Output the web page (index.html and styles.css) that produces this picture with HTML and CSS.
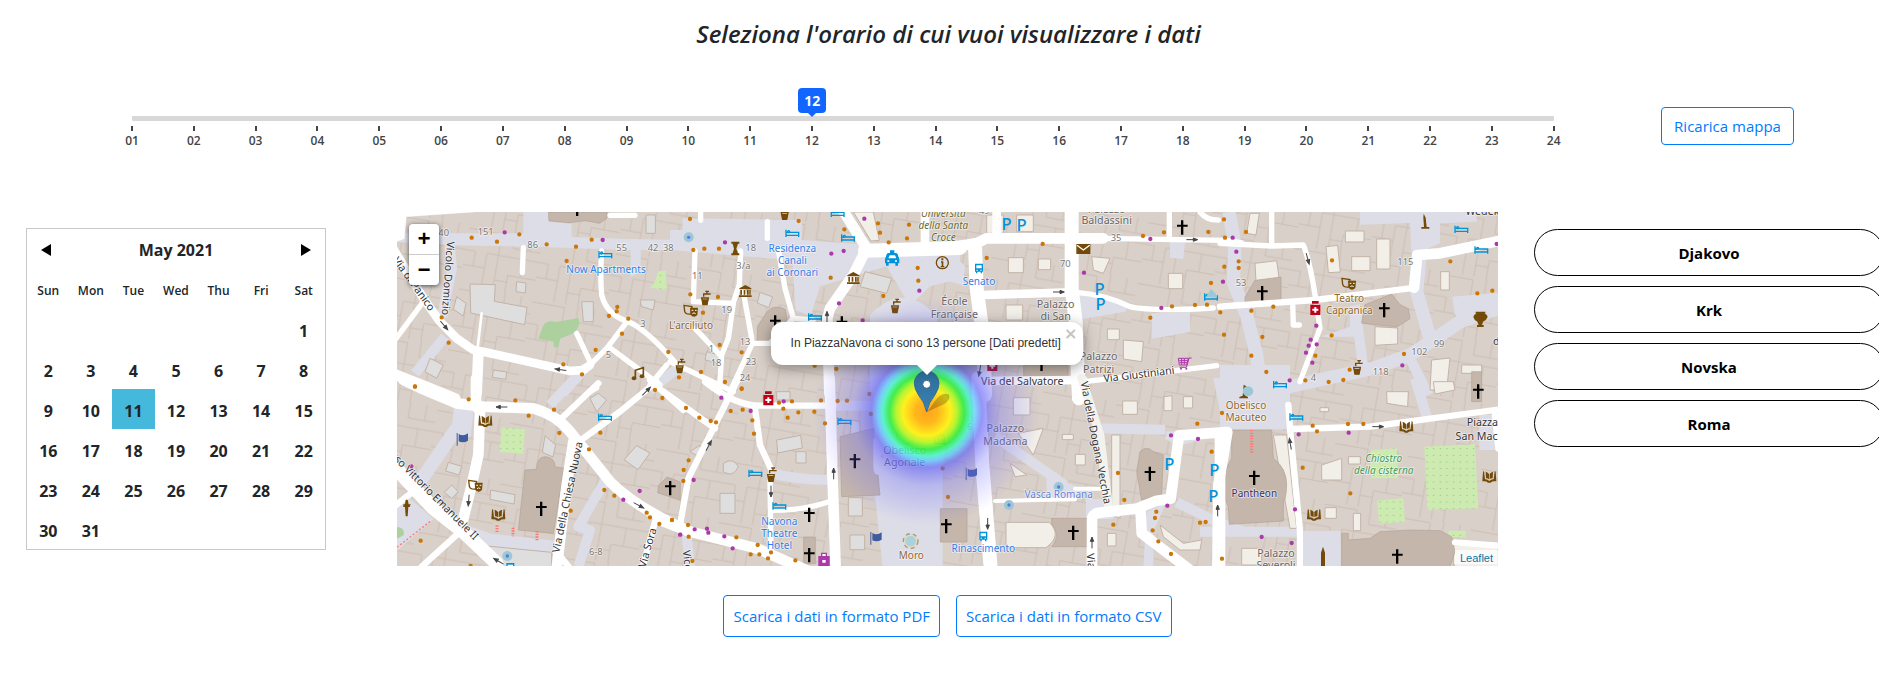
FILE: index.html
```html
<!DOCTYPE html>
<html lang="it">
<head>
<meta charset="utf-8">
<title>Mappa affollamento</title>
<link rel="stylesheet" href="styles.css">
</head>
<body>
<header class="page-title"><h1>Seleziona l'orario di cui vuoi visualizzare i dati</h1></header>

<section class="time-row">
  <div class="slider">
    <div class="slider-rail">
      <input class="slider-input" type="range" min="1" max="24" value="12" aria-label="Orario">
      <output class="slider-value">12</output>
    </div>
    <ul class="ticks">
      <li>01</li><li>02</li><li>03</li><li>04</li><li>05</li><li>06</li><li>07</li><li>08</li><li>09</li><li>10</li><li>11</li><li>12</li><li>13</li><li>14</li><li>15</li><li>16</li><li>17</li><li>18</li><li>19</li><li>20</li><li>21</li><li>22</li><li>23</li><li>24</li>
    </ul>
  </div>
  <button class="btn btn-reload" type="button">Ricarica mappa</button>
</section>

<main class="content">
  <section class="calendar">
    <div class="cal-head">
      <button class="cal-nav" type="button" aria-label="Mese precedente"><svg width="10" height="12" viewBox="0 0 10 12"><path d="M10 0v12L0 6z"/></svg></button>
      <span>May 2021</span>
      <button class="cal-nav" type="button" aria-label="Mese successivo"><svg width="10" height="12" viewBox="0 0 10 12"><path d="M0 0v12l10-6z"/></svg></button>
    </div>
    <table class="cal-table">
      <thead><tr><th>Sun</th><th>Mon</th><th>Tue</th><th>Wed</th><th>Thu</th><th>Fri</th><th>Sat</th></tr></thead>
      <tbody>
        <tr><td></td><td></td><td></td><td></td><td></td><td></td><td>1</td></tr>
        <tr><td>2</td><td>3</td><td>4</td><td>5</td><td>6</td><td>7</td><td>8</td></tr>
        <tr><td>9</td><td>10</td><td class="selected">11</td><td>12</td><td>13</td><td>14</td><td>15</td></tr>
        <tr><td>16</td><td>17</td><td>18</td><td>19</td><td>20</td><td>21</td><td>22</td></tr>
        <tr><td>23</td><td>24</td><td>25</td><td>26</td><td>27</td><td>28</td><td>29</td></tr>
        <tr><td>30</td><td>31</td><td></td><td></td><td></td><td></td><td></td></tr>
      </tbody>
    </table>
  </section>

  <div class="map-column">
    <div class="map">
      <svg class="map-canvas" viewBox="0 0 3303 1062" preserveAspectRatio="xMidYMid slice" role="img" aria-label="Mappa di Piazza Navona">
        <defs>
          <radialGradient id="heat">
            <stop offset="0" stop-color="#ffa51f"/><stop offset=".1" stop-color="#ffb61c"/><stop offset=".21" stop-color="#fff01e"/><stop offset=".27" stop-color="#b4f52a" stop-opacity=".95"/><stop offset=".33" stop-color="#2fef3c" stop-opacity=".9"/><stop offset=".39" stop-color="#40f5c8" stop-opacity=".8"/><stop offset=".43" stop-color="#58c4ff" stop-opacity=".75"/><stop offset=".49" stop-color="#5c5cf5" stop-opacity=".65"/><stop offset=".65" stop-color="#6a66f5" stop-opacity=".32"/><stop offset="1" stop-color="#6a66ff" stop-opacity="0"/>
          </radialGradient>
          <linearGradient id="pin" x2="0" y2="1"><stop stop-color="#2e6c97"/><stop offset="1" stop-color="#3883b7"/></linearGradient>
          <pattern id="orchard" width="20" height="20" patternUnits="userSpaceOnUse"><path fill="#cdebb0" d="M0 0h20v20H0z"/><path stroke="#8fc48a" stroke-width="3" d="M8 10h4"/></pattern>
          <pattern id="plots" width="178" height="148" patternUnits="userSpaceOnUse" patternTransform="rotate(10) scale(1.25)"><path class="wall" d="M0 8h80V60h98M80 60v88M0 96h52v52M52 96V60h28M112 0v38h40V0M110 104h68M110 104v44M140 60v44M24 96V60H0M80 120h30M152 38h26"/></pattern>
          <g id="cross"><path d="M-4-21h7v13h13v6H3v24h-7V-2h-12v-6h12z"/></g>
          <g id="bed" fill="none" stroke="#0092da" stroke-width="4"><path d="M-19-12v22M-19 5h38M19 10V-4H-8M-19-4h8"/><circle cx="-11" cy="-6" r="3"/></g>
          <g id="tap" fill="none" stroke="#734a08" stroke-width="4"><path d="M-11-2h20l-4 20H-7z"/><path fill="#734a08" d="M-8 4H7L4 17H-6z"/><path d="M-5-6v-8h21M5-14v-8M0-22h11"/></g>
          <g id="book" fill="#734a08"><path d="M-19-16l3-2 3 25Q-6 6 0 12 6 6 13 7l3-25 3 2 2 29Q8 12 4 17h-8Q-8 12-21 13z"/><path d="M-11-16Q-4-14-1-9v16q-4-4-9-3zM11-16Q4-14 1-9v16q4-4 9-3z"/></g>
          <g id="museum" fill="#734a08"><path d="M-18-8L0-18 18-8v3h-36zM-15-3h5v14h-5zM-5-3h5v14h-5zM5-3h5v14H5zM12-3h4v14h-4zM-19 13h38v5h-38z"/></g>
          <g id="mask"><path fill="none" stroke="#734a08" stroke-width="4" d="M-20-17l24 4-3 22q-16 2-19-8z"/><path fill="#734a08" d="M-2-10h24L20 12Q10 22 0 12z"/><path stroke="#fff" stroke-width="3" d="M3-2h5M13-2h5M5 8q5-5 10 0" fill="none"/></g>
          <g id="flag" fill="#3f5c9f"><path d="M-18-17h3v38h-3zM-12-14q14 8 28-2v22q-14 8-28 2z"/></g>
          <g id="bus"><path fill="#0092da" d="M-12-15h24v24h-3v5H5V9h-10v5h-4V9h-3z"/><path fill="#fff" d="M-8-10H8v9H-8zM-8 3h4v3h-4zM4 3h4v3H4z"/></g>
          <g id="med"><path fill="#c00018" d="M-10-21H10v8H-10zM-15-10h30v31h-30z"/><path fill="#fff" d="M-3-3h6v5h6v6H3v6h-6V8h-6V2h6z"/></g>
          <g id="arrow" stroke="#444" stroke-width="3" fill="#444"><path d="M-17 0h22"/><path d="M4-5l13 5L4 5z"/></g>
          <g id="fount"><circle r="15" fill="#9cc8d5"/><circle r="5" fill="#5a78e0"/></g>
        </defs>

        <!-- ground and building plots -->
        <path fill="#d9d0c9" d="M0 0h3303v1062H0z"/>
        <path fill="url(#plots)" d="M0 0h3303v1062H0z"/>

        <!-- pedestrian areas -->
        <g class="ped">
          <g transform="translate(-21 -21)"><path d="M45 85h355V21h75v30l70 5v40l175 6 150 3v30H752v65l-30 15v-79l-282-11-250-4-170-10z"/><path class="p30" d="M178 110l8 80-30 145"/><path class="p30" d="M165 395l-90 110"/><path class="p30" d="M588 485l-70 80M870 485l-90 70"/></g>
          <g transform="translate(819 -21)"><path d="M0 135V75h38V40l357 5v60l165 12 50 40 260-15v80l-90 22-60 60-70-120-200 60-28 90-45-18-10-150z"/><path d="M600 560V330q60-60 110-50 60 10 90 60l30 220z"/></g>
          <g transform="translate(1659 -21)"><path d="M0 150l45 30-5 60-40-10zM380 260q90 5 155 45l-10 15-145 25zM605 325l115-4v60l-115 20zM660 110h45l-5 52-40-4z"/></g>
          <g transform="translate(2469 -21)"><path class="p40" d="M27 21l18 100-5 110 40 100 30 120 15 120"/><path d="M420 21v38l150-5 5 100 85-40V55l110-5V21zM697 275l137-12v60l-110 25-20-20zM290 400l100-35v-60l40 0-10 90-120 0z"/><path class="p40" d="M600 150l-10 110 40 140M190 548l270-58 110-40 70-45 80-55 114-40"/><path class="p30" d="M405 300l25 190M565 450l60 120"/></g>
          <g transform="translate(-21 519)"><path d="M192 65h60l-10 90-60 5zM21 370l40-28 70 60-110 95z"/><path class="p40" d="M200 130L90 290M230 442l70 24 200 22"/><path class="p30" d="M650 280l-85 145 35 10-35 110M555-20l-75 80"/></g>
          <g transform="translate(819 519)"><path d="M608-20h230l-20 290v280H638l-28-270z"/><path class="p30" d="M295 262q80 22 182 23M50 450l10 100M490 62h120"/></g>
          <g transform="translate(1659 519)"><path class="p30" d="M440 130l205 4M135 155l210 145M680 352l120 58 80 30"/><path d="M290 275l90 28v45h-90zM408 342h82v60h-82zM590 380l60-30-40 90v110h-30zM650 140l160-10-5 22-120 30-40-20zM790-20h100v150h-70z"/></g>
          <g transform="translate(2469 519)"><path d="M0-60h210v192L0 135zM250 438h112v120H250zM778 90h60v105h-60z"/><path class="p30" d="M-60 440h310M585-20l40 130"/></g>
        </g>

        <!-- courtyards -->
        <g class="yard">
          <g transform="translate(-21 -21)"><path d="M240 237l76 2-3 50 98 18-7 52-162-35zM380 230l28 4-2 30-28-4zM200 275l28 20-8 38-30-20zM768 30h28v55h-28zM575 290h35v60h-30zM120 460l40 20-20 40-35-20zM750 285l45 0-5 30-35-10zM310 495l40 6-3 22-40-6z"/></g>
          <g transform="translate(819 -21)"><path d="M270 262l38 14-12 32-34-14zM585 200l80 20-15 45-80-20zM110 440l40 10-5 25-40-10z"/><path class="cream" d="M550 21h60l18 85-25 2z"/></g>
          <g transform="translate(1659 -21)"><path class="cream" d="M175 158h45v45h-45zM265 162h37v32h-37zM168 300h50v45h-50zM425 155l55 5-20 45-30-10zM655 205h43v46h-43zM472 372h36v32h-36zM520 405l60 5-5 60-55-8zM110 30h50v55h-50zM200 30h50v50h-50z"/></g>
          <g transform="translate(2469 -21)"><path class="cream" d="M90 25h28l-10 65-28-5zM105 175l65-8 8 58-70 6zM318 125l35-4 8 80-36 2zM376 78h56v33h-56zM470 102h40v90h-40zM395 155h55v42h-55zM465 365l68 4v48l-68 4zM635 465l55-6-10 96h-50zM662 200h26v55h-26zM725 480h60v25h-60z"/></g>
          <g transform="translate(-21 519)"><path d="M175 232l40 12-8 26-40-12zM185 300l20 20-20 20-22-18zM465 152l32 28-8 36-32-14zM302 315l73 14-3 28-72-14zM740 182l40 22-36 50-42-30zM600 40l25-15 25 20-30 35zM240 478l245 24v48H310z"/></g>
          <g transform="translate(819 519)"><path d="M320 165l72-14 5 38-74 15zM160 235q30-20 45 10-15 35-45 15zM320 45V20h40v25zM60 200l30-20 5 40zM150 325h45v60h-45zM535 338h42v55h-42zM540 450h44v44h-44zM378 200h30v34h-30zM545 105l25 5v40h-30z"/></g>
          <g transform="translate(1659 519)"><path class="cream" d="M190 38h50v52h-50zM205 145l75-15-30 80zM337 148h33v16h-33zM376 208h30v32h-30zM180 235l50 35-35 5zM168 412h130q40 40-10 76H168zM518 48h44v40h-44zM642 35l24-3v45h-24zM700 35h28v34h-28zM485 150h25v250l-25-10zM630 420l70 55 55-10-5 30-60 0-50-40zM472 445h26v38h-26z"/></g>
          <g transform="translate(2469 519)"><path class="cream" d="M160 150h40l30 280h-20zM305 240l60-20v65h-60zM315 368h34v32h-34zM400 385h22v52h-22zM640-10h60l5 25-60 12zM500 20l65 0-2 45-62-10zM300 68h26v12h-26zM65 490h60v50H65zM385 215h36v22h-36zM0 150h32l-22 90zM700 480h134v60H700z"/></g>
        </g>

        <!-- gardens -->
        <path fill="#add19e" d="M424 380l15-40q12-18 40-10l65-12q10 30-20 48l-35 14-5 26-14-1v-16zM0 945q24 0 20 25l-20 10z"/>
        <path fill="url(#orchard)" d="M770 215l15-38 22-1 2 56-50-4zM314 646l70 5-5 75-72-7zM2922 714l77-5 5 90h-82zM3082 704l152-7 10 192-153 5zM2941 866l78-7 5 70-78 7zM3154 956h52v20h-52z"/>

        <!-- churches and monuments -->
        <g class="church">
          <path d="M455 0h175v18l-22 16-42-8-50 6-60-6z"/>
          <path d="M1110 300q20-25 55-8l10 60-70 45-25-5 2-50z"/>
          <path d="M2544 255l30-50 78-10v68l-108 10zM2904 278l80-32 25 32 25 12 5 30-40 25-105-12zM1880 460h133v50h-133z"/>
          <path d="M384 774l35-2q0-38 27-38 28 3 28 30l27 5-32 195-105-10zM785 820l25-25 40 15v55l-68-23z"/>
          <path d="M1329 674l100-25 20 200-115 5zM1220 975h35v80h-35zM1630 890h80v100h-80z"/>
          <path d="M2229 719q20-20 40 0l30 10-5 120-60 15-15-85zM1964 919h105v85h-105q30-35 0-68z"/>
          <path d="M2504 654h120l5 85q40 30 40 80-2 45-10 50v58l-162 10-3-53q-13-25-15-65 5-50 25-80z"/>
          <path d="M2834 964h20v20l65-5 30-20 90-5 90 2 35 18 10 45-15 45h-325zM3224 479h30v90h-30z"/>
        </g>

        <!-- streets -->
        <g class="road">
          <path class="fill" d="M0 0h230L28 14 22 80 0 88z"/>
          <g transform="translate(-21 -21)"><path class="w26" d="M0 115l30 50 70 115 50 70 50 50 50 35 30 5 260 58 40-3 20-15"/><path class="w16" d="M595 485l55-55 65-85M635 138q-5 80 0 132 15 60 80 80 60 25 160 145M400 128l-3 75M100 290L15 405M655 425l155 115M560 385l40 85M660 31h75M600 560l20-12"/><path class="w30" d="M265 445l-5 120M15 508l80 32 100 40"/><path class="w8" d="M275 325l-13 110"/></g>
          <g transform="translate(819 -21)"><path class="w30" d="M515 10l75 120-40 80-70 100-8 30 6 225"/><path class="w40" d="M585 137l285-8"/><path class="w26" d="M765 21v100"/><path class="w16" d="M75 138l-5 152 120 5-15 105-20 50-7 110M212 138l-4 100-18 55M75 370l75 80M218 250l27 150v20l-65 140M325 135l20 115 25 90 60 5M370 340l-70 75h-60M0 470l190 90M292 50v50M92 21v25M-10 480l-50 60"/></g>
          <g transform="translate(1659 -21)"><path class="w30" d="M-60 135l140-20 30-15h350"/><path class="w16" d="M440 100l390 6 45 8M405 530l395-48M658 21v80M750 21q20 25 55 24M815 305l50-5"/><path class="w40" d="M365 10v240l12 100 10 230M75 120l5 130 20 150 5 170"/><path class="w26" d="M100 270l265-8M140 21v70M110 528l290-3"/><path class="w16" d="M380 262q90 8 160 43 60 15 250 4"/></g>
          <g transform="translate(2469 -21)"><path class="w16" d="M0 115l155 8 95-3q20 50 35 150l15 100-60 160M155 21v100M218 290l2 70h18"/><path class="w18" d="M0 305l285-20 285-35"/><path class="w30" d="M582 248l10-98 68-5 180-38"/></g>
          <g transform="translate(-21 519)"><path class="w30" d="M40-15l60 28 100 42 80 10 150 5q70 20 110 70l120 150q80 80 240 150"/><path class="w30" d="M258-20v80l12 20-5 130-20 90-32 130M550 170l-20 130-30 250"/><path class="w40" d="M-10 220l140 150 90 70 100 95"/><path class="w18" d="M580 160l110-80L800-10M515 100L625-5M780-15l100 90M205 445l-110 100M795 410l-38 140M0 375l75-60M500 500l40 50"/></g>
          <g transform="translate(819 519)"><path class="w30" d="M-30 405l90 35 200 50 160 70M479-20l8 280 10 290"/><path class="w18" d="M205-20l-85 170-65 130-25 140M105-10q90 72 165 72h220M255 70l15 110 32 70M-20 20L135 130"/><path class="w16" d="M300 290l3 210M310 376q90 0 167-26"/></g>
          <g transform="translate(1659 519)"><path class="w40" d="M85-20l12 260 25 310"/><path class="w26 cream-road" d="M395-20l55 170 26 220"/><path class="w12" d="M135 348l240-5M375 311h80"/><path class="w30" d="M426 550V405q0-20 24-22l110-12 60-24 42-6 25-190 145-10-27 160-3 260M572 380l3 65 145 110"/></g>
          <g transform="translate(2469 519)"><path class="w18" d="M205 60l5 70 30 310v120M215 132l235-7 390-52M705 472l130 10M825 90l10 100"/><path class="w30" d="M0 160v400"/></g>
        </g>
        <g fill="none" stroke="#f77" stroke-width="9" stroke-dasharray="4 4"><path d="M300 940v22M348 947v26M420 957v30M2564 654v70M1430 734h26"/><path stroke-width="4" stroke-dasharray="6 6" d="M0 1006l102-80"/></g>

        <!-- entrances and shops -->
        <g class="dots amber">
          <path transform="translate(-21 -21)" d="M245 98h0M321 110h0M388 88h0M470 118h0M558 125h0M530 168h0M605 104h0M682 306h0M680 319h0M657 333h0M715 341h0M696 386h0M617 435h0M835 441h0M155 337h0M176 413h0M520 478h0M576 508h0M75 545h0"/>
          <path transform="translate(819 -21)" d="M60 42h0M70 135h0M103 131h0M147 131h0M386 48h0M523 73h0M624 55h0M630 83h0M717 59h0M711 100h0M656 112h0M743 189h0M745 227h0M482 218h0M640 273h0M144 276h0M61 268h0M99 323h0M149 420h0M215 442h0M93 501h0M165 531h0M27 517h0M215 550h0M434 482h0M499 492h0"/>
          <path transform="translate(1659 -21)" d="M278 117h0M110 159h0M579 93h0M642 82h0M775 81h0M822 43h0M825 98h0M823 185h0M866 169h0M866 189h0M783 234h0M666 304h0M735 300h0M771 299h0M601 338h0M811 322h0M822 389h0"/>
          <path transform="translate(2469 -21)" d="M78 81h0M336 166h0M691 169h0M772 265h0M817 257h0M160 305h0M94 317h0M127 396h0M94 452h0M139 501h0M335 391h0M286 452h0M552 447h0M389 494h0M370 525h0M326 531h0M256 526h0"/>
          <path transform="translate(-21 519)" d="M75 4h0M236 43h0M376 46h0M416 92h0M492 74h0M508 144h0M631 143h0M597 193h0M795 15h0M817 39h0M643 315h0M673 332h0M770 383h0M780 397h0M808 417h0M846 405h0M542 377h0M92 467h0M242 543h0"/>
          <path transform="translate(819 519)" d="M215 12h0M48 69h0M88 98h0M122 108h0M138 112h0M182 78h0M218 74h0M247 106h0M252 146h0M327 53h0M366 49h0M340 71h0M353 98h0M385 82h0M433 80h0M453 46h0M465 115h0M503 48h0M531 47h0M598 27h0M603 87h0M56 226h0M41 255h0M40 288h0M54 420h0M56 455h0M199 457h0M263 480h0M242 508h0M268 508h0M303 502h0M294 520h0M376 526h0M67 528h0M6 405h0M818 250h0M834 336h0M809 113h0"/>
          <path transform="translate(1659 519)" d="M504 264h0M523 345h0M490 419h0M785 200h0M742 116h0M816 84h0M619 380h0M615 399h0M608 436h0M625 469h0M663 507h0M750 413h0M767 411h0M816 521h0"/>
          <path transform="translate(2469 519)" d="M278 122h0M291 139h0M384 117h0M430 117h0M248 248h0M391 325h0"/>
        </g>
        <g class="dots violet">
          <path d="M323 61h0M617 84h0M984 91h0M1303 125h0M1340 117h0M1402 20h0M1567 236h0M1326 274h0M1397 325h0M2260 81h0M2061 182h0M2293 288h0M2507 77h0M2518 119h0M2478 209h0M2758 341h0M2741 383h0M2735 401h0M2759 397h0M2727 422h0M2746 452h0M3016 460h0M2678 505h0M3299 96h0M43 763h0M679 863h0M728 837h0M849 968h0M973 557h0M1061 597h0M890 804h0M850 968h0M893 952h0M930 950h0M934 962h0M982 973h0M1007 1009h0M1160 568h0M2322 670h0M2403 681h0M2311 881h0M2705 667h0M2855 662h0M2694 892h0M2594 975h0M2684 993h0"/>
        </g>

        <!-- points of interest -->
        <g>
          <use href="#cross" x="541" y="-10"/><use href="#cross" x="1135" y="331"/><use href="#cross" x="1335" y="334"/><use href="#cross" x="2356" y="46"/><use href="#cross" x="2596" y="243"/><use href="#cross" x="2962" y="294"/><use href="#cross" x="3244" y="538"/><use href="#cross" x="433" y="890"/><use href="#cross" x="820" y="828"/><use href="#cross" x="1374" y="747"/><use href="#cross" x="1237" y="908"/><use href="#cross" x="1237" y="1029"/><use href="#cross" x="1648" y="942"/><use href="#cross" x="2029" y="962"/><use href="#cross" x="2259" y="785"/><use href="#cross" x="2572" y="797"/><use href="#cross" x="3001" y="1033"/><use href="#cross" x="1934" y="455"/>
          <use href="#bed" x="625" y="129"/><use href="#bed" x="1186" y="65"/><use href="#bed" x="1353" y="79"/><use href="#bed" x="1322" y="5"/><use href="#bed" x="1254" y="316"/><use href="#bed" x="2442" y="256"/><use href="#bed" x="3193" y="53"/><use href="#bed" x="3253" y="115"/><use href="#bed" x="2649" y="519"/><use href="#bed" x="2698" y="616"/><use href="#bed" x="624" y="617"/><use href="#bed" x="1342" y="629"/><use href="#bed" x="1075" y="785"/><use href="#bed" x="1147" y="883"/>
          <use href="#tap" x="925" y="260"/><use href="#tap" x="849" y="464"/><use href="#tap" x="1495" y="284"/><use href="#tap" x="1164" y="4"/><use href="#tap" x="1123" y="790"/><use href="#tap" x="2881" y="468"/>
          <use href="#museum" x="1045" y="237"/><use href="#museum" x="1369" y="198"/><use href="#museum" x="1628" y="679"/>
          <use href="#mask" x="881" y="297"/><use href="#mask" x="2855" y="216"/><use href="#mask" x="235" y="822"/>
          <use href="#book" x="265" y="628"/><use href="#book" x="304" y="909"/><use href="#book" x="3028" y="645"/><use href="#book" x="3277" y="795"/><use href="#book" x="2751" y="909"/>
          <use href="#flag" x="197" y="680"/><use href="#flag" x="1438" y="977"/><use href="#flag" x="1724" y="784"/>
          <use href="#bus" x="1746" y="170"/><use href="#bus" x="1759" y="974"/><use href="#bus" x="340" y="1068"/>
          <use href="#med" x="2755" y="288"/><use href="#med" x="1114" y="559"/><use href="#med" x="1786" y="456"/>
          <use href="#fount" x="875" y="76"/><use href="#fount" x="1985" y="825"/><use href="#fount" x="1836" y="879"/><use href="#fount" x="331" y="1032"/>
          <path fill="#734a08" d="M2540 518l8 5-3 28 8 4v4h-26v-4l10-4z"/>
          <path fill="#9cc8d5" d="M2537 538a16 15 0 1032 0 16 15 0 10-32 0M2426 256l16-25 18 18v7z"/>
          <path fill="#734a08" d="M3080 5l6 12 3 28h8v5h-24v-5h8l-2-28zM2772 1022l6-18 6 18v40h-12zM1003 89h24v6h-4l-5 15 5 14h4v6h-24v-6h4l4-14-4-15h-4zM26 863h6l3 14h6l-3 8h-4l-2 28h-6l-2-28h-5v-8h5zM3236 299h29v6h-5q10 0 12 10-4 10-14 14l-3 10h5v6h-20v-6h5l-4-10q-10-5-12-14 2-10 12-10h-5z"/>
          <path fill="none" stroke="#734a08" stroke-width="5" d="M715 497v-22l24-8v24"/><g fill="#734a08"><ellipse cx="711" cy="499" rx="7" ry="6"/><ellipse cx="735" cy="493" rx="7" ry="6"/></g>
          <circle cx="1636" cy="152" r="18" fill="none" stroke="#734a08" stroke-width="4"/><path fill="#734a08" d="M1633 139h6v6h-6zM1632 148h7v14h3v4h-11v-4h3v-10h-2z"/>
          <path fill="#0092da" d="M1464 142l5-15q2-4 6-4h4v-8h13v8h4q4 0 6 4l5 15v12h-4v7h-8v-7h-20v7h-8v-7h-3z"/><path fill="#fff" d="M1474 139l4-9h16l4 9zM1471 145h6v4h-6zM1494 145h6v4h-6z"/>
          <path fill="#734a08" d="M2038 96h42v30h-42z"/><path fill="none" stroke="#fff" stroke-width="4" d="M2040 100l19 14 19-14"/>
          <path fill="none" stroke="#ac39ac" stroke-width="3" d="M2344 439h30l-5 20h-22zM2384 438h-8l-8 28h-20M2347 446h26M2348 452h24M2354 440v18M2362 440v18"/><g fill="#ac39ac"><circle cx="2352" cy="470" r="3"/><circle cx="2368" cy="470" r="3"/></g>
          <path fill="#ac39ac" d="M1264 1032h8v-10h18v10h8v34h-34z"/><path fill="#fff" d="M1276 1026h10v6h-10zM1276 1044h10v8h-10z"/>
          <circle cx="1541" cy="987" r="22" fill="#e2d8c8" stroke="#a9967a" stroke-width="4" stroke-dasharray="12 10"/><circle cx="1541" cy="987" r="16" fill="#a9d3dc"/>
          <path class="ped" d="M1429 680q14-8 16 4l12 80q0 24-16 24-10 0-12-20z"/>
          <circle cx="1525" cy="671" r="26" fill="none" stroke="#8c9a90" stroke-width="2"/>
          <use href="#arrow" transform="translate(141 340) rotate(50)"/><use href="#arrow" transform="translate(491 473) rotate(188)"/><use href="#arrow" transform="translate(314 585) rotate(180)"/><use href="#arrow" transform="translate(215 865) rotate(95)"/><use href="#arrow" transform="translate(725 880) rotate(28)"/><use href="#arrow" transform="translate(748 538) rotate(-45)"/><use href="#arrow" transform="translate(935 701) rotate(-62)"/><use href="#arrow" transform="translate(1122 838) rotate(90)"/><use href="#arrow" transform="translate(1310 785) rotate(-90)"/><use href="#arrow" transform="translate(1290 315) rotate(-90)"/><use href="#arrow" transform="translate(1985 240)"/><use href="#arrow" transform="translate(2385 83)"/><use href="#arrow" transform="translate(2732 140) rotate(75)"/><use href="#arrow" transform="translate(2943 644)"/><use href="#arrow" transform="translate(2680 696) rotate(-100)"/><use href="#arrow" transform="translate(2462 896) rotate(-90)"/><use href="#arrow" transform="translate(2085 992) rotate(-90)"/><use href="#arrow" transform="translate(1772 935) rotate(90)"/><use href="#arrow" transform="translate(1748 476) rotate(100)"/><use href="#arrow" transform="translate(305 1048) rotate(210)"/>
        </g>

        <!-- labels -->
        <g class="label num">
          <text x="124" y="72">40</text><text x="242" y="70">151</text><text x="391" y="109">86</text><text x="658" y="117">55</text><text x="752" y="117">42</text><text x="798" y="117">38</text><text x="730" y="345">3</text><text x="626" y="438">5</text><text x="1045" y="117">18</text><text x="1018" y="172">3/a</text><text x="885" y="200">11</text><text x="973" y="304">19</text><text x="1028" y="399">13</text><text x="935" y="420">1</text><text x="941" y="462">18</text><text x="1046" y="460">23</text><text x="1028" y="508">24</text><text x="2141" y="86">35</text><text x="1989" y="165">70</text><text x="2516" y="222">53</text><text x="3001" y="159">115</text><text x="3110" y="405">99</text><text x="3043" y="429">102</text><text x="2927" y="489">118</text><text x="2741" y="508">4</text><text x="576" y="1028">6-8</text><text x="1664" y="585">3</text><text x="1660" y="625">10</text><text x="1710" y="655">6</text><text x="1746" y="7">49</text>
        </g>
        <g class="label blue"><text x="627" y="184">Now Apartments</text><text x="1186" y="120">Residenza</text><text x="1186" y="156">Canali</text><text x="1186" y="192">ai Coronari</text><text x="1746" y="219">Senato</text><text x="1147" y="939">Navona</text><text x="1147" y="975">Theatre</text><text x="1147" y="1011">Hotel</text><text x="1759" y="1021">Rinascimento</text><text class="vasca" x="1985" y="858">Vasca Romana</text></g>
        <g class="label brown"><text x="882" y="352">L'arciliuto</text><text x="2857" y="271">Teatro</text><text x="2857" y="306">Capranica</text><text x="2547" y="592">Obelisco</text><text x="2547" y="628">Macuteo</text><text x="1543" y="1042">Moro</text></g>
        <g class="label grey"><text x="1523" y="727">Obelisco</text><text x="1523" y="762">Agonale</text><text x="1672" y="280">École</text><text x="1672" y="319">Française</text><text x="1976" y="287">Palazzo</text><text x="1976" y="325">di San</text><text x="2129" y="37">Baldassini</text><text x="2129" y="2">Palazzo</text><text x="2105" y="444">Palazzo</text><text x="2105" y="482">Patrizi</text><text x="1825" y="661">Palazzo</text><text x="1825" y="699">Madama</text><text x="2637" y="1036">Palazzo</text><text x="2637" y="1072">Severoli</text></g>
        <g class="label olive"><text x="1639" y="15">Università</text><text x="1639" y="51">della Santa</text><text x="1639" y="86">Croce</text></g>
        <g class="label green"><text x="2960" y="749">Chiostro</text><text x="2960" y="785">della cisterna</text></g>
        <g class="label dark"><text x="2572" y="854" class="navy">Pantheon</text><text x="3256" y="641">Piazza</text><text x="3264" y="683">San Macuto</text><text x="3280" y="8">Wedekind</text><text x="3302" y="400">di</text></g>
        <g class="label street">
          <text transform="translate(142 198) rotate(94)">Vicolo Domizio</text>
          <text transform="translate(42 222) rotate(54)">Via di Panico</text>
          <text transform="translate(92 846) rotate(45)">Corso Vittorio Emanuele II</text>
          <text transform="translate(522 858) rotate(-78)">Via della Chiesa Nuova</text>
          <text transform="translate(762 1010) rotate(-74)">Via Sora</text>
          <text transform="translate(862 1060) rotate(84)">Vicolo</text>
          <text transform="translate(2086 694) rotate(79)">Via della Dogana Vecchia</text>
          <text transform="translate(2073 1066) rotate(84)">Via di</text>
          <text x="1876" y="518">Via del Salvatore</text>
          <text transform="translate(2227 498) rotate(-7)">Via Giustiniani</text>
        </g>
        <g class="parking"><text x="1829" y="55">P</text><text x="1874" y="58">P</text><text x="2108" y="248">P</text><text x="2111" y="295">P</text><text x="2317" y="773">P</text><text x="2452" y="791">P</text><text x="2449" y="869">P</text></g>

        <!-- crowd density -->
        <circle cx="1589" cy="600" r="340" fill="url(#heat)"/>
        <path d="M1590 600l22-30q22-32 44-22 6 14-14 28z" fill="#000" opacity=".22"/>
        <path fill="url(#pin)" stroke="#2e6c97" stroke-width="3" d="M1589 600q-6-30-24-50-13-20-13-36a37 37 0 0174 0q0 16-13 36-18 20-24 50z"/>
        <circle cx="1589" cy="517" r="12" fill="#fff" stroke="#2b638b" stroke-width="3"/>
      </svg>
      <div class="zoom"><button type="button" aria-label="Zoom in">+</button><button type="button" aria-label="Zoom out">−</button></div>
      <div class="popup">In PiazzaNavona ci sono 13 persone [Dati predetti]<button class="popup-close" type="button" aria-label="Chiudi">×</button></div>
      <a class="attribution" href="#">Leaflet</a>
    </div>
    <div class="downloads">
      <button class="btn" type="button">Scarica i dati in formato PDF</button>
      <button class="btn" type="button">Scarica i dati in formato CSV</button>
    </div>
  </div>

  <nav class="cities">
    <button type="button">Djakovo</button>
    <button type="button">Krk</button>
    <button type="button">Novska</button>
    <button type="button">Roma</button>
  </nav>
</main>
</body>
</html>
```
FILE: styles.css
```css
* { box-sizing: border-box; }
body {
  margin: 0;
  overflow-x: hidden;
  background: #fff;
  color: #212529;
  font-family: "Open Sans", "Noto Sans", sans-serif;
  font-size: 16px;
}
button { font-family: inherit; cursor: pointer; }

.page-title { padding: 16px 0 0 18px; text-align: center; }
.page-title h1 { margin: 0; font-size: 24px; line-height: 36px; font-weight: 600; font-style: italic; }

/* hour slider */
.time-row { display: flex; gap: 107px; padding: 55px 85px 0 132px; align-items: flex-start; }
.slider { flex: 1; padding-top: 9px; }
.slider-rail { position: relative; height: 5px; }
.slider-input {
  -webkit-appearance: none;
  appearance: none;
  display: block;
  width: 100%;
  height: 5px;
  margin: 0;
  border-radius: 1px;
  background: #d8d8d8;
}
.slider-input::-webkit-slider-thumb { -webkit-appearance: none; width: 1px; height: 5px; background: transparent; }
.slider-value {
  position: absolute;
  left: 47.83%;
  bottom: 8px;
  width: 28px;
  margin-left: -14px;
  border-radius: 4px;
  background: #16f;
  color: #fff;
  font-size: 14px;
  font-weight: 700;
  line-height: 25px;
  text-align: center;
}
.slider-value::after {
  content: "";
  position: absolute;
  top: 100%;
  left: 10px;
  border: 4px solid transparent;
  border-top-color: #16f;
  border-bottom: 0;
}
.ticks { display: flex; justify-content: space-between; margin: 5px -10px 0; padding: 0; list-style: none; }
.ticks li { width: 20px; color: #444; font-size: 12px; font-weight: 600; line-height: 20px; text-align: center; }
.ticks li::before { content: ""; display: block; width: 2px; height: 5px; margin: 0 auto; background: #444; }

.btn {
  height: 42px;
  padding: 0 9px;
  border: 1px solid #007bff;
  border-radius: 4px;
  background: #fff;
  color: #007bff;
  font-size: 15px;
  white-space: nowrap;
}
.btn-reload { width: 133px; height: 38px; }

.content { display: grid; grid-template-columns: 300px minmax(0, 1fr) 345px; padding: 61px 0 0 26px; }

/* calendar */
.calendar { align-self: start; margin-top: 16px; border: 1px solid #c8c8c8; font-weight: 700; }
.cal-head { display: flex; align-items: center; justify-content: space-between; height: 40px; padding: 2px 14px 0; }
.cal-nav { display: flex; padding: 0; border: 0; background: none; }
.cal-table { width: 100%; table-layout: fixed; border-collapse: collapse; }
.cal-table th, .cal-table td { height: 40px; padding: 3px 0 0; text-align: center; }
.cal-table th { font-size: 12px; font-weight: 600; }
.cal-table .selected { background: #44b9dc; }

/* map */
.map-column { margin: 0 36px 0 71px; }
.map { position: relative; height: 354px; overflow: hidden; background: #ddd; }
.map-canvas { display: block; width: 100%; height: 100%; }
.wall { fill: none; stroke: #c9bbb0; stroke-width: 2px; }
.ped { fill: #dddde8; stroke: none; }
.ped .p30, .ped .p40 { fill: none; stroke: #dddde8; stroke-linejoin: round; }
.ped .p30 { stroke-width: 30px; }
.ped .p40 { stroke-width: 40px; }
.yard { fill: #dedede; stroke: #c3b3a7; stroke-width: 3px; }
.yard .cream { fill: #f2efe9; }
.church { fill: #c4b6ab; stroke: #b3a294; stroke-width: 2px; }
.road { fill: none; stroke: #fff; stroke-linecap: round; stroke-linejoin: round; }
.road .fill { fill: #fff; }
.road .w8 { stroke-width: 8px; }
.road .w12 { stroke-width: 12px; }
.road .w16 { stroke-width: 16px; }
.road .w18 { stroke-width: 19px; }
.road .w26 { stroke-width: 26px; }
.road .w30 { stroke-width: 32px; }
.road .w40 { stroke-width: 42px; }
.road .cream-road { stroke: #f4f2ec; }
.dots { fill: none; stroke-width: 13px; stroke-linecap: round; }
.amber { stroke: #cb7708; }
.violet { stroke: #ac39ac; }
.label { font-family: "Noto Sans", "Open Sans", sans-serif; font-size: 30px; text-anchor: middle; paint-order: stroke; stroke: rgba(255, 255, 255, .6); stroke-width: 5px; stroke-linejoin: round; }
.num { fill: #777; font-size: 28px; text-anchor: start; }
.blue { fill: #2f7fe8; }
.blue .vasca { fill: #6482dc; }
.brown { fill: #90662e; }
.grey { fill: #666; font-size: 32px; }
.olive { fill: #6c6c35; font-style: italic; }
.green { fill: #3e9b5c; font-style: italic; }
.dark { fill: #333; font-size: 32px; }
.dark .navy { fill: #33306b; font-size: 30px; }
.street { fill: #333; font-size: 32px; }
.parking { fill: #0092da; font-family: "Noto Sans", sans-serif; font-size: 50px; font-weight: 500; text-anchor: middle; }

.zoom {
  position: absolute;
  top: 12px;
  left: 12px;
  width: 30px;
  border-radius: 4px;
  background: #fff;
  box-shadow: 0 1px 5px rgba(0, 0, 0, .65);
}
.zoom button {
  display: block;
  width: 30px;
  height: 30px;
  padding: 3px 0 0;
  border: 0;
  background: none;
  color: #000;
  font: 700 22px/27px "Liberation Mono", monospace;
}
.zoom button:first-child { height: 31px; border-bottom: 1px solid #ccc; }
.popup {
  position: absolute;
  top: 110px;
  left: 48.1%;
  width: 312px;
  margin-left: -156px;
  padding: 0 20px;
  border-radius: 12px;
  background: #fff;
  box-shadow: 0 3px 14px rgba(0, 0, 0, .4);
  color: #333;
  font: 12px/43px "Liberation Sans", Arial, sans-serif;
  white-space: nowrap;
}
.popup::after {
  content: "";
  position: absolute;
  top: 100%;
  left: 146px;
  border: 10px solid transparent;
  border-top-color: #fff;
  border-bottom: 0;
}
.popup-close {
  position: absolute;
  top: 4px;
  right: 3px;
  width: 18px;
  padding: 0;
  border: 0;
  background: none;
  color: #c3c3c3;
  font: 700 16px/16px "DejaVu Sans", sans-serif;
}
.attribution {
  position: absolute;
  right: 0;
  bottom: 0;
  padding: 0 5px;
  background: rgba(255, 255, 255, .7);
  color: #0078a8;
  font: 11px/16px "Liberation Sans", Arial, sans-serif;
  text-decoration: none;
}
.downloads { display: flex; justify-content: center; gap: 16px; margin-top: 29px; }

/* cities */
.cities { display: flex; flex-direction: column; gap: 10px; padding-top: 17px; }
.cities button {
  width: 350px;
  height: 47px;
  border: 1px solid #000;
  border-radius: 24px;
  background: #fff;
  color: #000;
  font-size: 15px;
  font-weight: 700;
}
```
